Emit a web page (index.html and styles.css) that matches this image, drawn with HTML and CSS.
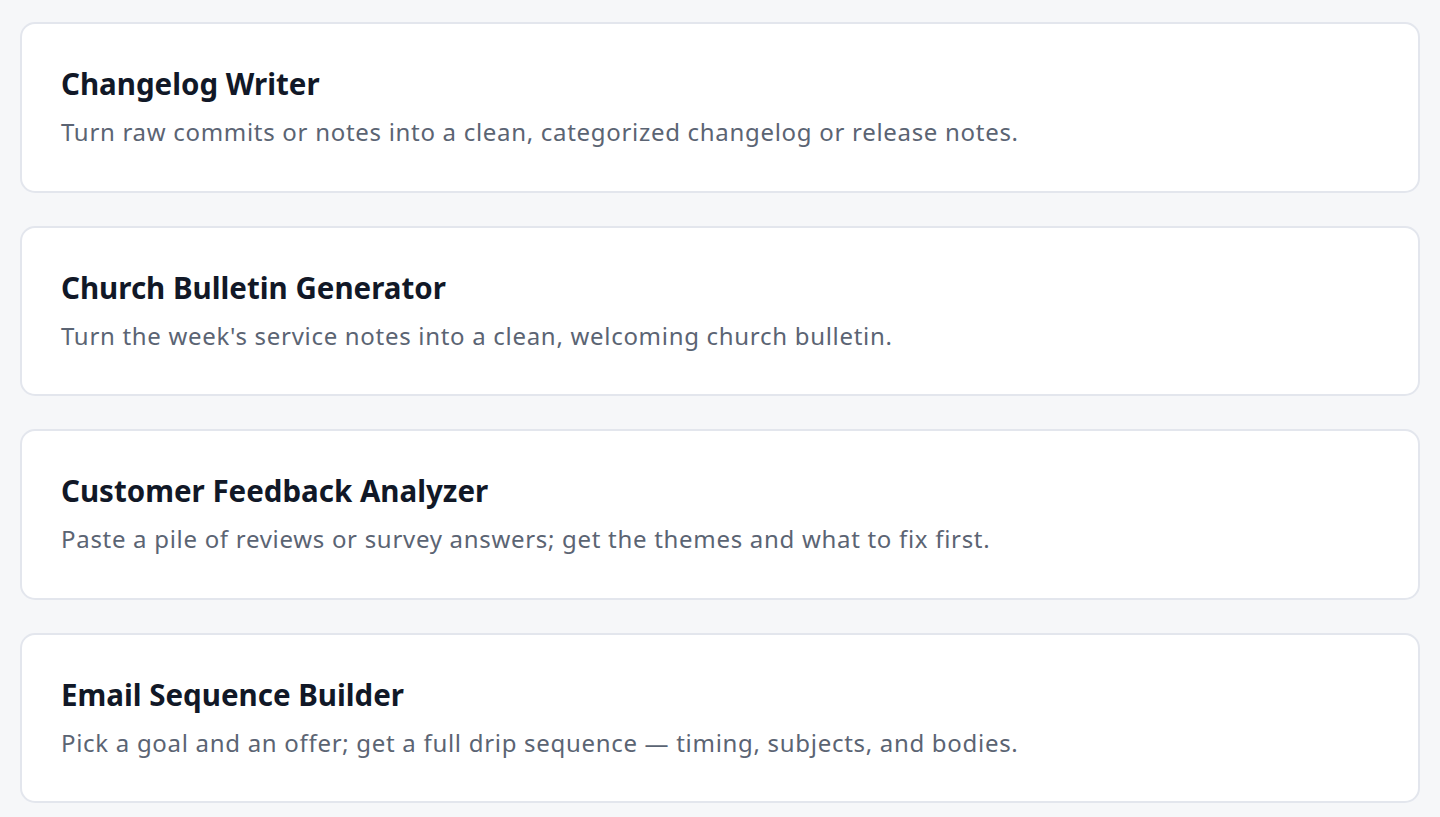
FILE: index.html
```html
<!DOCTYPE html>
<html lang="en">
<head>
    <meta charset="UTF-8">
    <meta name="viewport" content="width=device-width, initial-scale=1.0">
    <title>Tools</title>
    <link rel="stylesheet" href="styles.css">
</head>
<body>
    <div class="tool-list">
        <div class="tool-card">
            <h3 class="tool-name">Changelog Writer</h3>
            <p class="tool-desc">Turn raw commits or notes into a clean, categorized changelog or release notes.</p>
        </div>
        <div class="tool-card">
            <h3 class="tool-name">Church Bulletin Generator</h3>
            <p class="tool-desc">Turn the week's service notes into a clean, welcoming church bulletin.</p>
        </div>
        <div class="tool-card">
            <h3 class="tool-name">Customer Feedback Analyzer</h3>
            <p class="tool-desc">Paste a pile of reviews or survey answers; get the themes and what to fix first.</p>
        </div>
        <div class="tool-card">
            <h3 class="tool-name">Email Sequence Builder</h3>
            <p class="tool-desc">Pick a goal and an offer; get a full drip sequence — timing, subjects, and bodies.</p>
        </div>
    </div>
</body>
</html>
```

FILE: styles.css
```css
/* page */
body {
    margin: 0;
    padding: 22px 20px;
    background: #f6f7f9;
    font-family: "Noto Sans", "Open Sans", sans-serif;
    color: #111827;
}

/* list of cards */
.tool-list {
    display: flex;
    flex-direction: column;
    gap: 33px;
}

.tool-card {
    background: #ffffff;
    border: 2px solid #e3e6ed;
    border-radius: 15px;
    padding: 40px 39px 40.6px;
}

.tool-name {
    margin: 0;
    font-size: 29.5px;
    font-weight: 700;
    line-height: 39px;
    color: #111827;
}

.tool-desc {
    margin: 11px 0 0;
    font-size: 24px;
    letter-spacing: 0.7px;
    line-height: 36px;
    color: #5b6473;
}
```
